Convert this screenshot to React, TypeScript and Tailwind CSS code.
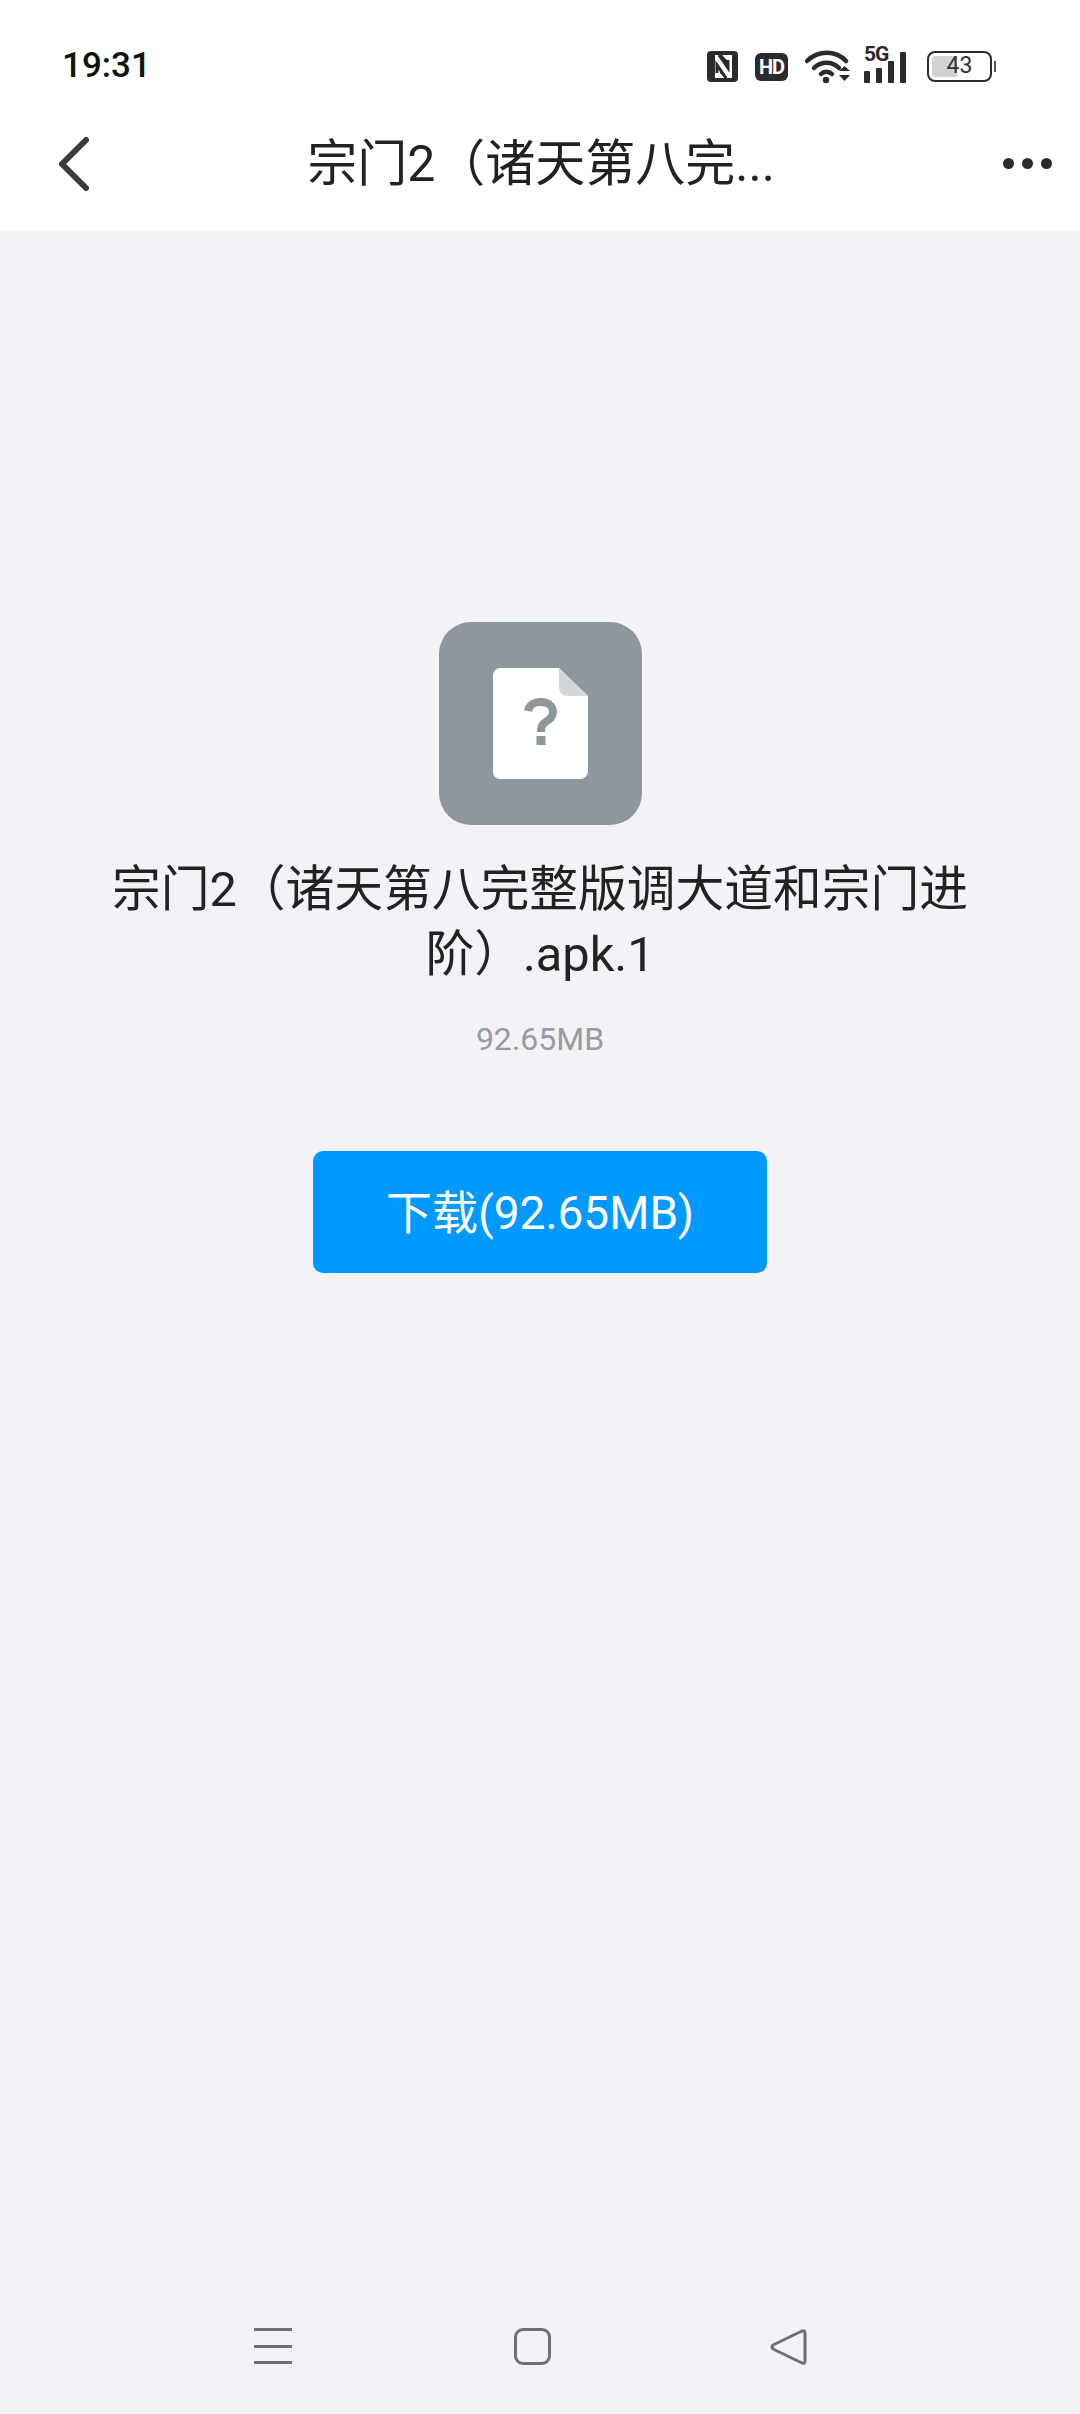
const FONT = "font-['Roboto','Noto_Sans_CJK_SC',sans-serif]";

function StatusIcons() {
  return (
    <div className="flex items-center">
      {/* NFC */}
      <svg width="31" height="31" viewBox="0 0 31 31" className="mr-[17px]">
        <rect width="31" height="31" rx="4" fill="#2b2b2d" />
        <path d="M8 27V4h5l7 11V9l-5-5h10v23h-5l-7-11v6l5 5z" fill="#fff" />
        <path d="M12 4l9 13v-8M19 27l-9-13v8" fill="none" stroke="#2b2b2d" strokeWidth="3" />
      </svg>
      {/* HD */}
      <div className="mr-[17px] flex h-[28px] w-[33px] items-center justify-center rounded-[6px] bg-[#2b2b2d] font-['Roboto',sans-serif] text-[20px] font-bold tracking-[-1px] text-white">
        HD
      </div>
      {/* wifi */}
      <svg width="46" height="34" viewBox="0 0 46 34" className="mr-[13px]" fill="none" stroke="#2b2b2d" strokeLinecap="round">
        <path d="M2 11C13 0 31 0 41 11" strokeWidth="4.5" />
        <path d="M9 18C16 11 27 11 34 18" strokeWidth="4.5" />
        <path d="M16 24C19 21 24 21 27 24" strokeWidth="4.5" />
        <circle cx="21" cy="30" r="3.2" fill="#2b2b2d" stroke="none" />
        <path d="M34 21h11l-5.500-5zM34 25h11l-5.500 6z" fill="#2b2b2d" stroke="none" />
      </svg>
      {/* 5G + signal */}
      <div className="relative mr-[15px] flex h-[33px] w-[48px] items-end gap-[6px]">
        <span className="absolute left-0 top-[-7px] font-['Roboto',sans-serif] text-[21px] leading-[22px] font-bold tracking-[-1px] text-[#2b2b2d]">5G</span>
        <div className="h-[12px] w-[6px] rounded-[1px] bg-[#2b2b2d]" />
        <div className="h-[15px] w-[6px] rounded-[1px] bg-[#2b2b2d]" />
        <div className="h-[22px] w-[6px] rounded-[1px] bg-[#2b2b2d]" />
        <div className="h-[31px] w-[6px] rounded-[1px] bg-[#2b2b2d]" />
      </div>
      {/* battery */}
      <div className="flex items-center gap-[2px]">
        <div className="relative flex h-[31px] w-[65px] items-center justify-center overflow-hidden rounded-[8px] border-2 border-[#2b2b2d] p-[3px]">
          <div className="absolute bottom-[3px] left-[3px] top-[3px] w-[25px] rounded-l-[4px] bg-[#d2d2d2]" />
          <span className="relative font-['Roboto',sans-serif] text-[23px] text-[#333]">43</span>
        </div>
        <div className="h-[11px] w-[2px] bg-[#555]" />
      </div>
    </div>
  );
}

function FileIcon() {
  return (
    <div className="flex h-[203px] w-[203px] items-center justify-center rounded-[32px] bg-[#8e979e]">
      <svg width="95" height="112" viewBox="0 0 95 112">
        <path d="M7 0H66L95 28V103a8 8 0 0 1-8 8H7a7 7 0 0 1-7-7V7a7 7 0 0 1 7-7z" fill="#fff" />
        <path d="M66 0L95 28H74a8 8 0 0 1-8-8z" fill="#d3d7da" />
        <path d="M35 43c1-6 6-9 13-9 7 0 12 4 12 10 0 5-3 7-6 9-3 2-6 4-6 9v2" fill="none" stroke="#8e979e" strokeWidth="8" />
        <rect x="43.500" y="68" width="9" height="9" fill="#8e979e" />
      </svg>
    </div>
  );
}

export default function App() {
  return (
    <div className={`flex h-[2414px] w-[1080px] flex-col overflow-hidden bg-[#f2f2f7] ${FONT}`}>
      <div className="bg-white">
        <div className="flex h-[105px] items-center justify-between pl-[62px] pr-[84px] pt-[28px]">
          <span className="text-[35px] font-medium text-[#111]">19:31</span>
          <StatusIcons />
        </div>
        <div className="flex h-[126px] items-center justify-between pb-[8px] pl-[59px] pr-[28px]">
          <svg width="30" height="54" viewBox="0 0 30 54" fill="none" stroke="#3a3a3c" strokeWidth="6" strokeLinecap="round" strokeLinejoin="round">
            <path d="M27 3L3 27l24 24" />
          </svg>
          <div className="mr-[10px] w-[480px] text-center text-[50px] leading-[64px] whitespace-nowrap text-[#222]">宗门2（诸天第八完...</div>
          <div className="-mt-[2px] flex gap-[8px]">
            <div className="h-[11px] w-[11px] rounded-full bg-[#2b2b2d]" />
            <div className="h-[11px] w-[11px] rounded-full bg-[#2b2b2d]" />
            <div className="h-[11px] w-[11px] rounded-full bg-[#2b2b2d]" />
          </div>
        </div>
      </div>

      <div className="flex flex-1 flex-col items-center pt-[391px]">
        <FileIcon />
        <div className="mt-[32px] w-[880px] text-center text-[48.75px] leading-[65px] text-[#222]">
          宗门2（诸天第八完整版调大道和宗门进阶）.apk.1
        </div>
        <div className="mt-[32px] text-[32px] leading-[40px] text-[#9a9aa0]">92.65MB</div>
        <button className="mt-[92px] flex h-[122px] w-[454px] items-center justify-center rounded-[10px] bg-[#0099ff] pt-[2px] text-[46px] text-white">
          下载(92.65MB)
        </button>
      </div>

      <div className="flex h-[86px] items-start pl-[254px]">
        <div className="flex h-[36px] w-[38px] flex-col justify-between">
          <div className="h-[3px] bg-[#6f6f76]" />
          <div className="h-[3px] bg-[#6f6f76]" />
          <div className="h-[3px] bg-[#6f6f76]" />
        </div>
        <div className="ml-[222px] h-[37px] w-[37px] rounded-[9px] border-[3px] border-[#6f6f76]" />
        <svg width="39" height="38" viewBox="0 0 39 38" className="ml-[218px]" fill="none" stroke="#6f6f76" strokeWidth="3" strokeLinejoin="round">
          <path d="M33 3L4 17q-2 2 0 4l29 14q3 1 3-2V5q0-3-3-2z" />
        </svg>
      </div>
    </div>
  );
}
